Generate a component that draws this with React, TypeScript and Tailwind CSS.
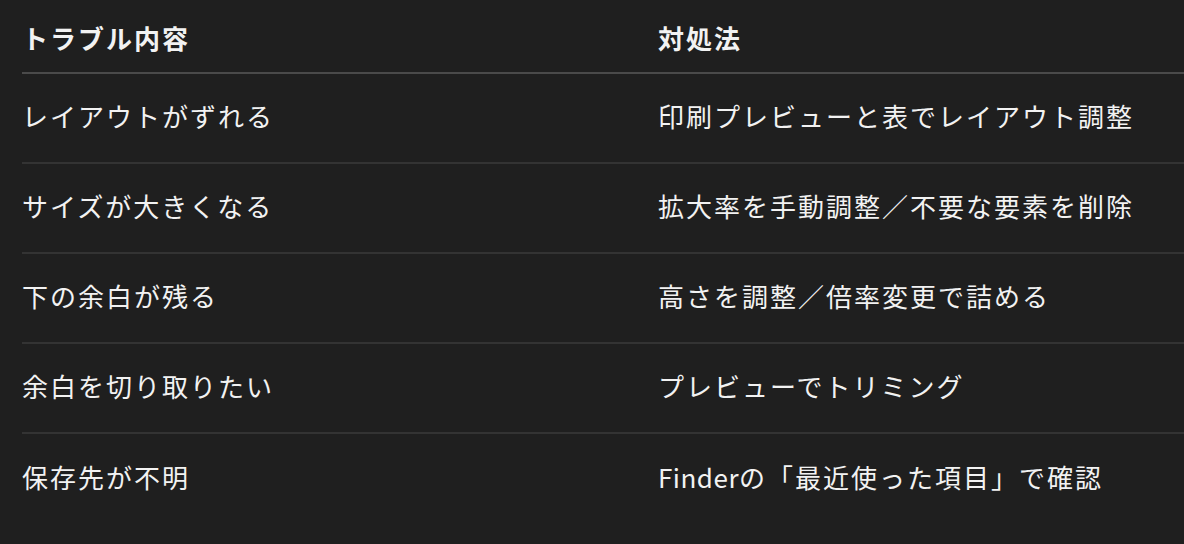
const rows: [string, React.ReactNode][] = [
  ['レイアウトがずれる', '印刷プレビューと表でレイアウト調整'],
  ['サイズが大きくなる', '拡大率を手動調整／不要な要素を削除'],
  ['下の余白が残る', '高さを調整／倍率変更で詰める'],
  ['余白を切り取りたい', 'プレビューでトリミング'],
  [
    '保存先が不明',
    <>
      <span className="tracking-[0.5px]">Finder</span>の「最近使った項目」で確認
    </>,
  ],
]

export default function App() {
  return (
    <div
      className="min-h-[544px] w-full overflow-hidden bg-[#1f1f1f] pl-[22px] text-[#f2f2f2]"
      style={{ fontFamily: '"Noto Sans CJK JP", "Noto Sans", sans-serif' }}
    >
      <div className="grid grid-cols-[636px_1fr] border-b-2 border-[#4a4a4a] pt-[2px] h-[74px] items-center text-[26px] font-bold tracking-[2px]">
        <div>トラブル内容</div>
        <div>対処法</div>
      </div>
      {rows.map(([a, b], i) => (
        <div
          key={i}
          className={
            'grid h-[90px] grid-cols-[636px_1fr] items-center pb-[5px] text-[26px] tracking-[2px] ' +
            (i < rows.length - 1 ? 'border-b-2 border-[#333333]' : '')
          }
        >
          <div>{a}</div>
          <div>{b}</div>
        </div>
      ))}
    </div>
  )
}
